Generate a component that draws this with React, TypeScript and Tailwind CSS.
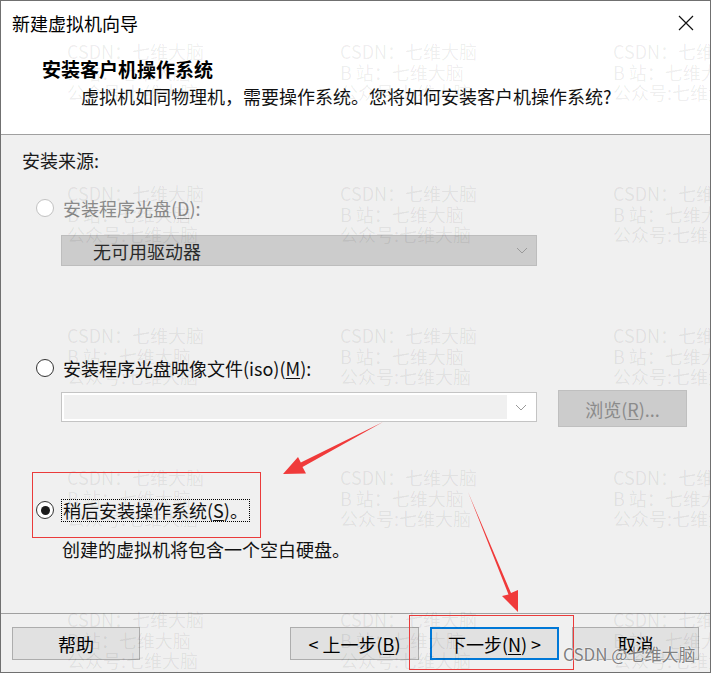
import React from "react";

const marks = Array.from({ length: 15 });

const Radio = ({ checked = false, disabled = false }: { checked?: boolean; disabled?: boolean }) => (
    <span
        className={
            "w-[18px] h-[18px] rounded-full bg-white border flex items-center justify-center shrink-0 " +
            (disabled ? "border-[#c2c2c2]" : "border-[#333333]")
        }
    >
        {checked && <span className="w-[9px] h-[9px] rounded-full bg-[#1b1b1b]" />}
    </span>
);

const Chevron = () => (
    <svg width="12" height="7" viewBox="0 0 12 7" className="shrink-0">
        <polyline points="1,1 6,6 11,1" fill="none" stroke="#9a9a9a" strokeWidth="1" />
    </svg>
);

const Button = ({ children, className = "" }: { children: React.ReactNode; className?: string }) => (
    <div
        className={
            "h-[33px] bg-[#e1e1e1] flex items-center justify-center text-[18px] leading-none text-black " + className
        }
    >
        {children}
    </div>
);

export default function App() {
    return (
        <div className="w-[712px] h-[673px] bg-white font-['Noto_Sans_CJK_SC','Liberation_Sans',sans-serif]">
            <div className="relative w-[711px] h-[673px] border border-[#707070] bg-[#f0f0f0] flex flex-col overflow-hidden">
                {/* header */}
                <div className="h-[134px] bg-white border-b border-[#a0a0a0] flex flex-col shrink-0">
                    <div className="h-[44px] flex items-center justify-between pl-[11px] pr-[16px]">
                        <span className="text-[18px] leading-none text-black">新建虚拟机向导</span>
                        <svg width="16" height="16" viewBox="0 0 16 16">
                            <path d="M1 1 L15 15 M15 1 L1 15" stroke="#111" strokeWidth="1.2" />
                        </svg>
                    </div>
                    <div className="mt-[10px] h-[26px] flex items-center pl-[41px] text-[19px] leading-none font-bold text-black">
                        安装客户机操作系统
                    </div>
                    <div className="mt-[2px] h-[26px] flex items-center pl-[80px] text-[18px] leading-none text-[#111]">
                        虚拟机如同物理机，需要操作系统。您将如何安装客户机操作系统?
                    </div>
                </div>

                {/* body */}
                <div className="flex-1 flex flex-col text-[18px] leading-none">
                    <div className="mt-[12px] h-[26px] flex items-center pl-[21px] text-[#1a1a1a]">安装来源:</div>

                    <div className="mt-[22px] h-[26px] flex items-center pl-[35px] gap-[9px] text-[#8a8a8a]">
                        <Radio disabled />
                        <span>
                            安装程序光盘(<u className="underline-offset-2">D</u>):
                        </span>
                    </div>
                    <div className="mt-[14px] ml-[60px] w-[476px] h-[31px] bg-[#cccccc] border border-[#bdbdbd] flex items-center pl-[31px] pr-[8px] justify-between text-[#2a2a2a]">
                        <span>无可用驱动器</span>
                        <Chevron />
                    </div>

                    <div className="mt-[89px] h-[26px] flex items-center pl-[35px] gap-[9px] text-[#111]">
                        <Radio />
                        <span>
                            安装程序光盘映像文件(iso)(<u className="underline-offset-2">M</u>):
                        </span>
                    </div>
                    <div className="mt-[9px] flex items-start">
                        <div className="mt-[2px] ml-[60px] w-[476px] h-[30px] bg-white border border-[#c4c4c4] p-[2px] flex items-center">
                            <div className="w-[443px] h-full bg-[#f0f0f0]" />
                            <div className="flex-1 flex justify-center">
                                <Chevron />
                            </div>
                        </div>
                        <div className="ml-[21px] w-[129px] h-[37px] bg-[#cccccc] border border-[#bfbfbf] flex items-center justify-center text-[#8b8b8b]">
                            浏览(<u className="underline-offset-2">R</u>)...
                        </div>
                    </div>

                    <div className="mt-[70px] h-[26px] flex items-center pl-[35px] gap-[7px] text-[#111]">
                        <Radio checked />
                        <span className="h-[23px] px-[1px] flex items-center border border-dotted border-black">
                            稍后安装操作系统(<u className="underline-offset-2">S</u>)。
                        </span>
                    </div>
                    <div className="mt-[13px] h-[26px] flex items-center pl-[61px] text-[#111]">
                        创建的虚拟机将包含一个空白硬盘。
                    </div>
                </div>

                {/* footer */}
                <div className="h-[59px] shrink-0 border-t border-[#a0a0a0] flex items-start pt-[13px]">
                    <Button className="ml-[11px] w-[128px] border border-[#adadad]">帮助</Button>
                    <Button className="ml-[150px] w-[129px] border border-[#adadad]">
                        &lt; 上一步(<u className="underline-offset-2">B</u>)
                    </Button>
                    <Button className="ml-[11px] w-[129px] border-2 border-[#0078d7]">
                        下一步(<u className="underline-offset-2">N</u>) &gt;
                    </Button>
                    <Button className="ml-[13px] w-[127px] border border-[#adadad]">取消</Button>
                </div>

                {/* watermark */}
                <div className="absolute inset-0 pointer-events-none pt-[40px] pl-[66px] grid grid-cols-[273px_273px_273px] auto-rows-[142px]">
                    {marks.map((_, i) => (
                        <div key={i} className="flex flex-col text-[18px] leading-[20.5px] text-black/[0.07] whitespace-nowrap">
                            <span>CSDN：七维大脑</span>
                            <span>B 站：七维大脑</span>
                            <span>公众号:七维大脑</span>
                        </div>
                    ))}
                </div>

                {/* annotations */}
                <div className="absolute z-10 left-[31px] top-[471px] w-[229px] h-[66px] border border-[#ea3b3b] pointer-events-none" />
                <div className="absolute z-10 left-[408px] top-[614px] w-[165px] h-[55px] border border-[#ea3b3b] pointer-events-none" />
                <svg className="absolute z-10 -left-px -top-px pointer-events-none" width="712" height="673">
                    <polygon
                        points="383,422 302.5,467 306,473.5 283,474 298,457 300.8,462.5"
                        fill="#f03a3a"
                    />
                    <polygon
                        points="468,492 511,593 518,590 518,612 502,596 508.5,594.5"
                        fill="#f03a3a"
                    />
                </svg>
                <span className="absolute z-10 left-[562px] top-[642px] text-[17px] leading-[22px] text-[#808080] [text-shadow:0_0_2px_#ffffff,0_0_1px_#ffffff] pointer-events-none whitespace-nowrap">
                    CSDN @七维大脑
                </span>
            </div>
        </div>
    );
}
